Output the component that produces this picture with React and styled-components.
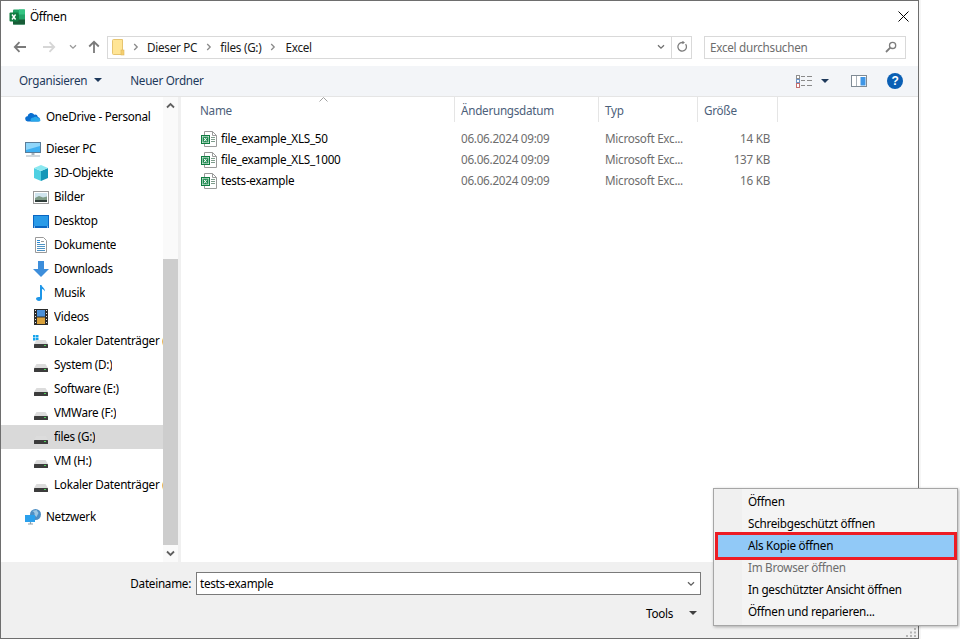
import React from 'react'
import styled, { createGlobalStyle } from 'styled-components'

const GlobalStyle = createGlobalStyle`
    html, body {
        margin: 0;
        background: #ffffff;
        overflow: hidden;
    }
    body {
        font-family: "Noto Sans", "Open Sans", sans-serif;
        font-size: 11.7px;
        letter-spacing: -0.27px;
        color: #000000;
    }
`

// icons
const ExcelLogo = () => (
    <svg width="16" height="16" viewBox="0 0 16 16">
        <rect x="4" y="0.5" width="12" height="15" rx="1" fill="#21a366" />
        <rect x="10" y="0.5" width="6" height="5" fill="#33c481" />
        <rect x="4" y="5.5" width="6" height="5" fill="#107c41" />
        <rect x="4" y="10.5" width="12" height="5" fill="#185c37" />
        <rect x="0.5" y="3.5" width="9" height="9" rx="1" fill="#107c41" />
        <path d="M3 5.5l3.6 5M6.6 5.5l-3.6 5" stroke="#fff" strokeWidth="1.4" />
    </svg>
)
const FolderIcon = () => (
    <svg width="14" height="18" viewBox="0 0 14 18">
        <path d="M1.5 2.5c0-.6.4-1 1-1h9v15h-9c-.6 0-1-.4-1-1z" fill="#ffe595" stroke="#e6c470" />
        <rect x="10" y="12" width="3" height="5" fill="#f5cf6f" stroke="#dcb75e" strokeWidth="0.6" />
    </svg>
)
const ArrowLeft = ({ color }) => (
    <svg width="14" height="12" viewBox="0 0 14 12">
        <path d="M13 6H2M6.5 1.2L1.8 6l4.7 4.8" fill="none" stroke={color} strokeWidth="1.8" />
    </svg>
)
const ArrowRight = ({ color }) => (
    <svg width="14" height="12" viewBox="0 0 14 12">
        <path d="M1 6h11M7.5 1.2L12.2 6l-4.7 4.8" fill="none" stroke={color} strokeWidth="1.8" />
    </svg>
)
const ArrowUp = () => (
    <svg width="12" height="14" viewBox="0 0 12 14">
        <path d="M6 13V2M1.2 6.5L6 1.8l4.8 4.7" fill="none" stroke="#7a7a7a" strokeWidth="1.8" />
    </svg>
)
const ChevronDown = ({ color = '#7a7a7a', w = 8 }) => (
    <svg width={w} height="6" viewBox="0 0 8 6">
        <path d="M1 1.2l3 3 3-3" fill="none" stroke={color} strokeWidth="1.3" />
    </svg>
)
const ChevronRight = () => (
    <svg width="6" height="8" viewBox="0 0 6 8">
        <path d="M1.2 1l3 3-3 3" fill="none" stroke="#8a8a8a" strokeWidth="1.3" />
    </svg>
)
const ScrollChevron = ({ up }) => (
    <svg width="9" height="7" viewBox="0 0 9 7">
        <path d={up ? 'M1 5.5l3.5-3.5 3.5 3.5' : 'M1 1.5l3.5 3.5 3.5-3.5'} fill="none" stroke="#606060" strokeWidth="1.8" />
    </svg>
)
const Caret = ({ color = '#1e395b' }) => (
    <svg width="8" height="4" viewBox="0 0 8 4">
        <path d="M0 0h8L4 4z" fill={color} />
    </svg>
)
const RefreshIcon = () => (
    <svg width="12" height="12" viewBox="0 0 12 12">
        <path d="M9.6 3.2a4.3 4.3 0 1 1-3.4-1.7H8" fill="none" stroke="#7d7d7d" strokeWidth="1.3" />
        <path d="M6.4 0l2.6 1.6-2.6 1.6z" fill="#7d7d7d" />
    </svg>
)
const SearchIcon = () => (
    <svg width="12" height="12" viewBox="0 0 12 12">
        <circle cx="7.6" cy="4.4" r="3.1" fill="none" stroke="#7d7d7d" strokeWidth="1.3" />
        <path d="M5.3 6.7L1 11" stroke="#7d7d7d" strokeWidth="1.8" />
    </svg>
)
const CloseIcon = () => (
    <svg width="11" height="11" viewBox="0 0 11 11">
        <path d="M.5.5l10 10M10.5.5l-10 10" stroke="#000" strokeWidth="1" />
    </svg>
)
const ViewsIcon = () => (
    <svg width="16" height="13" viewBox="0 0 16 13">
        <rect x="0.5" y="0.5" width="3" height="3" fill="#fff" stroke="#8f8f8f" />
        <rect x="0.5" y="4.5" width="3" height="3" fill="#fff" stroke="#6f93c4" />
        <rect x="0.5" y="8.5" width="3" height="4" fill="#fff" stroke="#c46f6f" />
        <path d="M5 1.5h4M11 1.5h5M5 5.5h4M11 5.5h5M5 10.5h4M11 10.5h5" stroke="#8a8a8a" />
    </svg>
)
const PaneIcon = () => (
    <svg width="16" height="12" viewBox="0 0 16 12">
        <rect x="0.5" y="0.5" width="15" height="11" fill="#fff" stroke="#7f8a94" />
        <rect x="9.5" y="2" width="5" height="8.5" fill="#3f96e6" />
        <path d="M5.5 1v10" stroke="#a9b1b8" />
    </svg>
)
const HelpIcon = () => (
    <svg width="16" height="16" viewBox="0 0 16 16">
        <circle cx="8" cy="8" r="8" fill="#0a5fb4" />
        <text x="8" y="12.2" textAnchor="middle" fontSize="12" fontWeight="700" fontFamily="Liberation Sans, sans-serif" fill="#fff">?</text>
    </svg>
)
const CloudIcon = () => (
    <svg width="16" height="16" viewBox="0 0 16 16">
        <path d="M3 12.5a2.6 2.6 0 0 1-.4-5.2 3.6 3.6 0 0 1 6.7-1.6 3 3 0 0 1 3.6 2.2 2.4 2.4 0 0 1 .6 4.6z" fill="#0a6fd0" />
        <path d="M6 12.5c-1.300-2.500.5-4.300 2.600-4 1-1.200 3.300-.8 4.300.6 2.500.2 3.300 2.700 1.700 3.400z" fill="#28a8ea" />
    </svg>
)
const MonitorIcon = () => (
    <svg width="16" height="16" viewBox="0 0 16 16">
        <rect x="0.5" y="1.500" width="15" height="10" fill="#3fb0f2" stroke="#5a7d99" />
        <path d="M1 2h14v3L1 9z" fill="#8fd6fa" />
        <path d="M6.500 12h3v2h-3z" fill="#a8b5bf" />
        <path d="M1 15h14" stroke="#a3b0ba" />
    </svg>
)
const CubeIcon = () => (
    <svg width="16" height="16" viewBox="0 0 16 16">
        <path d="M1 3l7 3v10l-7-3z" fill="#4fd0e2" />
        <path d="M8 6v10l7-3V3z" fill="#1497b8" />
        <path d="M1 3l7 3 7-3-7-3z" fill="#8be8f0" />
    </svg>
)
const PictureIcon = () => (
    <svg width="16" height="13" viewBox="0 0 16 13">
        <rect x="0.5" y="0.5" width="15" height="12" fill="#fff" stroke="#9a9a9a" />
        <rect x="2" y="2" width="12" height="9" fill="#cfe4ee" />
        <path d="M2 7l4-2 4 1.500 4-1V11H2z" fill="#7f9c88" />
        <path d="M2 9h12v2H2z" fill="#2f3d3a" />
    </svg>
)
const DesktopIcon = () => (
    <svg width="16" height="13" viewBox="0 0 16 13">
        <rect x="0" y="0" width="16" height="13" fill="#0a66c2" />
        <path d="M1 1h14v10H1z" fill="#2a9be8" />
        <path d="M1 12h1M14 12h1" stroke="#fff" />
    </svg>
)
const DocIcon = () => (
    <svg width="12" height="16" viewBox="0 0 12 16">
        <path d="M.5.500h8l3 3v12H.5z" fill="#fff" stroke="#9a9a9a" />
        <path d="M2 3.500h3M2 5.500h3" stroke="#2a8ad4" />
        <path d="M2 7.500h8M2 9.500h8M2 11.500h8M2 13.500h8" stroke="#4f93c4" />
        <path d="M6 4.500h3" stroke="#9a9a9a" />
    </svg>
)
const DownloadIcon = () => (
    <svg width="16" height="16" viewBox="0 0 16 16">
        <path d="M5 0h6v8h5l-8 8-8-8h5z" fill="#3d8edb" />
    </svg>
)
const MusicIcon = () => (
    <svg width="10" height="16" viewBox="0 0 10 16">
        <path d="M4 0h1.500c.3 2.200 3.500 3 3.500 6.500-.8-1.500-2-2.200-3-2.500v9.500c0 1.500-1.500 2.500-3 2.500S0 15 0 13.800s1.500-2.300 4-1.800z" fill="#1e96e8" />
    </svg>
)
const FilmIcon = () => (
    <svg width="14" height="16" viewBox="0 0 14 16">
        <rect width="14" height="16" fill="#2b2b2b" />
        <rect x="3" y="1" width="8" height="6.500" fill="#4a90d9" />
        <rect x="3" y="8.500" width="8" height="6.500" fill="#d9a13b" />
        <path d="M1 1.500h1M1 4.500h1M1 7.500h1M1 10.500h1M1 13.500h1M12 1.500h1M12 4.500h1M12 7.500h1M12 10.500h1M12 13.500h1" stroke="#e6e6e6" />
    </svg>
)
const DriveIcon = ({ win }) => (
    <svg width="16" height="16" viewBox="0 0 16 16">
        {win && <path d="M0 2h2.500v2.500H0zM3 2h2.500v2.500H3zM0 5h2.500v2.500H0zM3 5h2.500v2.500H3z" fill="#16a4ec" />}
        <path d="M1 11l2.500-4h9L15 11z" fill="#dcdcdc" />
        <rect x="1" y="11" width="14" height="4" rx="0.500" fill="#3c3c3c" />
        <rect x="11" y="12" width="2" height="1" fill="#4fd05a" />
    </svg>
)
const NetworkIcon = () => (
    <svg width="16" height="16" viewBox="0 0 16 16">
        <circle cx="10.500" cy="5.500" r="5.500" fill="#4f8fc4" />
        <path d="M7 2c2 .5 3 2 2.500 4l2 2 2-4-2-3z" fill="#9cc7e4" />
        <rect x="0" y="6" width="10" height="7" fill="#2ba0ec" />
        <path d="M3 15h5M5.500 13v2" stroke="#8ba0ae" strokeWidth="1.200" />
    </svg>
)
const XlsIcon = () => (
    <svg width="16" height="16" viewBox="0 0 16 16">
        <path d="M3.500.500h8l4 4v11h-12z" fill="#fff" stroke="#9a9a9a" />
        <path d="M11.500.500v4h4" fill="none" stroke="#9a9a9a" />
        <path d="M10 6.500h4M10 8.500h4M10 10.500h4" stroke="#7f9c8c" />
        <rect x="0.500" y="4.500" width="8" height="8" fill="#fff" stroke="#107c41" />
        <rect x="1.500" y="5.500" width="6" height="6" fill="#1e8a50" />
        <path d="M3 6.800l2.700 3.500M5.700 6.800L3 10.300" stroke="#fff" />
    </svg>
)
const GripIcon = () => (
    <svg width="11" height="9" viewBox="0 0 11 9">
        <path d="M8 0h2v2H8zM4 3.500h2v2H4zM8 3.500h2v2H8zM0 7h2v2H0zM4 7h2v2H4zM8 7h2v2H8z" fill="#b5b5b5" />
    </svg>
)

const tree = [
    { label: 'OneDrive - Personal', icon: <CloudIcon />, root: true, gap: true },
    { label: 'Dieser PC', icon: <MonitorIcon />, root: true },
    { label: '3D-Objekte', icon: <CubeIcon /> },
    { label: 'Bilder', icon: <PictureIcon /> },
    { label: 'Desktop', icon: <DesktopIcon /> },
    { label: 'Dokumente', icon: <DocIcon /> },
    { label: 'Downloads', icon: <DownloadIcon /> },
    { label: 'Musik', icon: <MusicIcon /> },
    { label: 'Videos', icon: <FilmIcon /> },
    { label: 'Lokaler Datenträger (C:)', icon: <DriveIcon win /> },
    { label: 'System (D:)', icon: <DriveIcon /> },
    { label: 'Software (E:)', icon: <DriveIcon /> },
    { label: 'VMWare (F:)', icon: <DriveIcon /> },
    { label: 'files (G:)', icon: <DriveIcon />, selected: true },
    { label: 'VM (H:)', icon: <DriveIcon /> },
    { label: 'Lokaler Datenträger (I:)', icon: <DriveIcon />, gap: true },
    { label: 'Netzwerk', icon: <NetworkIcon />, root: true },
]

const files = [
    { name: 'file_example_XLS_50', size: '14 KB' },
    { name: 'file_example_XLS_1000', size: '137 KB' },
    { name: 'tests-example', size: '16 KB' },
]

const menuItems = [
    { label: 'Öffnen' },
    { label: 'Schreibgeschützt öffnen' },
    { label: 'Als Kopie öffnen', active: true },
    { label: 'Im Browser öffnen', disabled: true },
    { label: 'In geschützter Ansicht öffnen' },
    { label: 'Öffnen und reparieren...' },
]

class App extends React.Component {
    render() {
        return (
            <Page>
                <GlobalStyle />
                <Dialog>
                    <TitleBar>
                        <TitleIcon><ExcelLogo /></TitleIcon>
                        <TitleText>Öffnen</TitleText>
                        <CloseButton><CloseIcon /></CloseButton>
                    </TitleBar>
                    <NavBar>
                        <NavButton $w={24}><ArrowLeft color="#7a7a7a" /></NavButton>
                        <NavButton $w={30}><ArrowRight color="#d6d6d6" /></NavButton>
                        <NavButton $w={14}><ChevronDown color="#9a9a9a" /></NavButton>
                        <NavButton $w={23}><ArrowUp /></NavButton>
                        <AddressBox>
                            <FolderSlot><FolderIcon /></FolderSlot>
                            <Crumb $w={22}><ChevronRight /></Crumb>
                            <span>Dieser PC</span>
                            <Crumb $w={23}><ChevronRight /></Crumb>
                            <span>files (G:)</span>
                            <Crumb $w={24}><ChevronRight /></Crumb>
                            <span>Excel</span>
                            <AddressEnd>
                                <ChevronDown color="#6f6f6f" w={10} />
                            </AddressEnd>
                            <RefreshSlot><RefreshIcon /></RefreshSlot>
                        </AddressBox>
                        <SearchBox>
                            <span>Excel durchsuchen</span>
                            <SearchIcon />
                        </SearchBox>
                    </NavBar>
                    <Toolbar>
                        <ToolButton>Organisieren<Caret /></ToolButton>
                        <ToolButton>Neuer Ordner</ToolButton>
                        <ToolbarRight>
                            <ViewsSlot><ViewsIcon /><Caret /></ViewsSlot>
                            <PaneIcon />
                            <HelpIcon />
                        </ToolbarRight>
                    </Toolbar>
                    <Body>
                        <NavPane>
                            {tree.map(item => (
                                <TreeRow key={item.label} $root={item.root} $gap={item.gap} $selected={item.selected}>
                                    <TreeIcon>{item.icon}</TreeIcon>
                                    <TreeLabel>{item.label}</TreeLabel>
                                </TreeRow>
                            ))}
                        </NavPane>
                        <Scrollbar>
                            <ScrollEnd><ScrollChevron up /></ScrollEnd>
                            <ScrollTrack><ScrollThumb /></ScrollTrack>
                            <ScrollEnd><ScrollChevron /></ScrollEnd>
                        </Scrollbar>
                        <FileList>
                            <SortMark>
                                <svg width="9" height="5" viewBox="0 0 9 5">
                                    <path d="M.5 4.500l4-4 4 4" fill="none" stroke="#a0a0a0" />
                                </svg>
                            </SortMark>
                            <HeaderRow>
                                <HeaderCell>Name</HeaderCell>
                                <HeaderCell>Änderungsdatum</HeaderCell>
                                <HeaderCell>Typ</HeaderCell>
                                <HeaderCell>Größe</HeaderCell>
                            </HeaderRow>
                            <Rows>
                                {files.map(file => (
                                    <FileRow key={file.name}>
                                        <NameCell><XlsIcon /><FileName>{file.name}</FileName></NameCell>
                                        <DetailCell>06.06.2024 09:09</DetailCell>
                                        <DetailCell>Microsoft Exc...</DetailCell>
                                        <SizeCell>{file.size}</SizeCell>
                                    </FileRow>
                                ))}
                            </Rows>
                        </FileList>
                    </Body>
                    <Footer>
                        <NameRow>
                            <NameLabel>Dateiname:</NameLabel>
                            <NameInput>
                                <NameValue>tests-example</NameValue>
                                <ChevronDown color="#606060" w={10} />
                            </NameInput>
                        </NameRow>
                        <ToolsRow>Tools<Caret color="#404040" /></ToolsRow>
                    </Footer>
                    <Grip><GripIcon /></Grip>
                    <Menu>
                        {menuItems.map(item => (
                            <MenuItem key={item.label} $active={item.active} $disabled={item.disabled}>
                                {item.label}
                            </MenuItem>
                        ))}
                    </Menu>
                </Dialog>
                <Outside />
            </Page>
        )
    }
}

const Page = styled.div`
    display: flex;
    width: 960px;
    height: 639px;
    overflow: hidden;
`
const Dialog = styled.div`
    position: relative;
    display: flex;
    flex-direction: column;
    box-sizing: border-box;
    width: 919px;
    height: 639px;
    border: 1px solid #6e6e6e;
    background: #ffffff;
`
const Outside = styled.div`
    flex: 1;
    border-left: 2px solid #f6f6f6;
`
const TitleBar = styled.div`
    display: flex;
    align-items: center;
    height: 31px;
    padding: 0 9px 0 8px;
`
const TitleIcon = styled.span`
    display: flex;
    margin-right: 5px;
`
const TitleText = styled.span`
    flex: 1;
    padding-bottom: 2px;
`
const CloseButton = styled.span`
    display: flex;
`
const NavBar = styled.div`
    display: flex;
    align-items: center;
    gap: 2px;
    height: 34px;
    padding: 0 12px 4px 7px;
    box-sizing: border-box;
`
const NavButton = styled.span`
    display: flex;
    align-items: center;
    justify-content: center;
    width: ${props => props.$w}px;
`
const AddressBox = styled.div`
    display: flex;
    align-items: center;
    box-sizing: border-box;
    width: 585px;
    height: 23px;
    border: 1px solid #d9d9d9;
    color: #1a1a1a;
`
const FolderSlot = styled.span`
    display: flex;
    margin-left: 3px;
`
const Crumb = styled.span`
    display: flex;
    width: ${props => props.$w}px;
    justify-content: center;
`
const AddressEnd = styled.span`
    display: flex;
    margin-left: auto;
    align-items: center;
    justify-content: center;
    width: 20px;
    height: 21px;
`
const RefreshSlot = styled.span`
    display: flex;
    align-items: center;
    justify-content: center;
    width: 19px;
    height: 21px;
    border-left: 1px solid #d9d9d9;
`
const SearchBox = styled.div`
    display: flex;
    align-items: center;
    justify-content: space-between;
    box-sizing: border-box;
    width: 202px;
    height: 23px;
    margin-left: 10px;
    padding: 0 8px 0 5px;
    border: 1px solid #d9d9d9;
    color: #6d6d6d;
`
const Toolbar = styled.div`
    display: flex;
    align-items: center;
    gap: 28px;
    box-sizing: border-box;
    height: 31px;
    padding: 0 15px 0 18px;
    background: #f3f5f8;
    border-bottom: 1px solid #e5e5e5;
`
const ToolButton = styled.span`
    display: flex;
    align-items: center;
    gap: 7px;
    padding-bottom: 2px;
    color: #1e395b;
`
const ToolbarRight = styled.div`
    display: flex;
    align-items: center;
    gap: 20px;
    margin-left: auto;
`
const ViewsSlot = styled.span`
    display: flex;
    align-items: center;
    gap: 9px;
    margin-right: 2px;
`
const Body = styled.div`
    flex: 1;
    display: flex;
    min-height: 0;
`
const NavPane = styled.div`
    width: 162px;
    padding-top: 8px;
    overflow: hidden;
`
const TreeRow = styled.div`
    display: flex;
    align-items: center;
    height: 24px;
    margin-bottom: ${props => (props.$gap ? 8 : 0)}px;
    padding-left: ${props => (props.$root ? 24 : 32)}px;
    background: ${props => (props.$selected ? '#d9d9d9' : 'transparent')};
    white-space: nowrap;
`
const TreeIcon = styled.span`
    display: flex;
    justify-content: center;
    width: 16px;
    margin-right: 5px;
    flex-shrink: 0;
`
const TreeLabel = styled.span`
    padding-bottom: 2px;
    overflow: hidden;
`
const Scrollbar = styled.div`
    display: flex;
    flex-direction: column;
    width: 15px;
    border-right: 3px solid #f0f0f0;
    background: #fafafa;
`
const ScrollEnd = styled.div`
    display: flex;
    align-items: center;
    justify-content: center;
    height: 17px;
`
const ScrollTrack = styled.div`
    flex: 1;
    display: flex;
    flex-direction: column;
    justify-content: flex-end;
`
const ScrollThumb = styled.div`
    height: 286px;
    background: #cdcdcd;
`
const FileList = styled.div`
    position: relative;
    flex: 1;
`
const SortMark = styled.span`
    position: absolute;
    left: 138px;
    top: 0;
    display: flex;
`
const columns = '274px 144px 99px 80px'
const HeaderRow = styled.div`
    display: grid;
    grid-template-columns: ${columns};
    height: 25px;
`
const HeaderCell = styled.div`
    display: flex;
    align-items: center;
    padding-left: 6px;
    padding-top: 0;
    border-right: 1px solid #e5e5e5;
    color: #4c607a;

    &:first-child {
        padding-left: 19px;
    }
`
const Rows = styled.div`
    padding-top: 6px;
`
const FileRow = styled.div`
    display: grid;
    grid-template-columns: ${columns};
    align-items: center;
    height: 21px;
`
const NameCell = styled.div`
    display: flex;
    align-items: center;
    gap: 4px;
    padding-left: 20px;
`
const FileName = styled.span`
    padding-bottom: 2px;
`
const DetailCell = styled.div`
    padding: 0 0 2px 6px;
    color: #6d6d6d;
`
const SizeCell = styled.div`
    padding: 0 8px 2px 0;
    text-align: right;
    color: #6d6d6d;
`
const Footer = styled.div`
    box-sizing: border-box;
    height: 76px;
    padding-top: 10px;
    background: #f0f0f0;
`
const NameRow = styled.div`
    display: flex;
    align-items: center;
    gap: 5px;
`
const NameLabel = styled.span`
    width: 190px;
    padding-bottom: 2px;
    text-align: right;
`
const NameInput = styled.div`
    display: flex;
    align-items: center;
    justify-content: space-between;
    box-sizing: border-box;
    width: 505px;
    height: 23px;
    padding: 0 4px 0 3px;
    background: #ffffff;
    border: 1px solid #7a7a7a;
`
const NameValue = styled.span`
    padding-bottom: 2px;
`
const ToolsRow = styled.div`
    display: flex;
    align-items: center;
    gap: 16px;
    margin: 8px 0 0 645px;
    height: 20px;
`
const Grip = styled.span`
    position: absolute;
    right: 1px;
    bottom: 1px;
    display: flex;
`
const Menu = styled.div`
    position: absolute;
    left: 712px;
    top: 487px;
    box-sizing: border-box;
    width: 245px;
    padding: 2px 3px 2px 4px;
    border: 1px solid #a6a6a6;
    background: linear-gradient(to right, #f0f0f0 28px, #f4f4f4 28px);
    box-shadow: 1px 1px 3px rgba(0, 0, 0, 0.3);
`
const MenuItem = styled.div`
    display: flex;
    align-items: center;
    height: 22px;
    padding: 0 0 2px 30px;
    box-sizing: border-box;
    color: ${props => (props.$disabled ? '#6d6d6d' : '#000000')};
    background: ${props => (props.$active ? '#91c9f7' : 'transparent')};
    outline: ${props => (props.$active ? '3px solid #ed1c24' : 'none')};
`

export default App
